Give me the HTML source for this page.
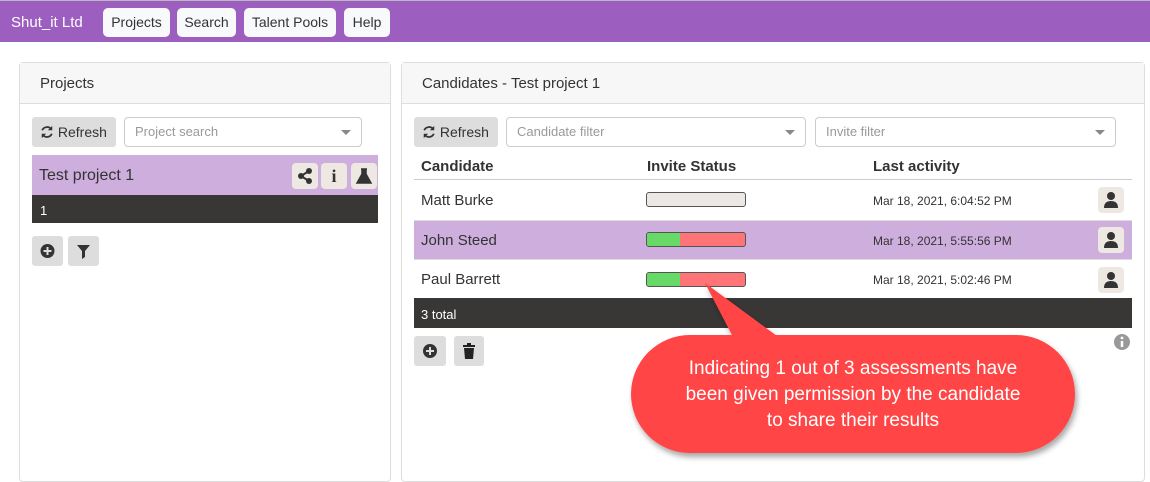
<!DOCTYPE html>
<html><head><meta charset="utf-8"><style>
*{box-sizing:border-box;margin:0;padding:0}
body{width:1150px;height:470px;overflow:hidden;background:#fff;font-family:"Liberation Sans",sans-serif;color:#333;position:relative}
.abs{position:absolute}
.nav{left:0;top:0;width:1150px;height:42px;background:#9c5ebf;border-top:1px solid #bbb}
.nb{position:absolute;top:7px;height:29px;background:#f8f9fa;border-radius:5px;font-size:14px;line-height:29px;text-align:center;color:#333}
.panel{border:1px solid #ddd;border-radius:4px;background:#fff}
.ph{position:absolute;left:0;top:0;right:0;height:41px;background:#f7f7f7;border-bottom:1px solid #ddd;font-size:15px;line-height:41px;padding-left:20px;color:#333}
.btn{position:absolute;background:#ddd;border-radius:3px;font-size:14px;line-height:30px;color:#333}
.sel{position:absolute;border:1px solid #ccc;border-radius:4px;height:30px;font-size:13px;color:#999;line-height:28px;padding-left:10px;background:#fff}
.sel:after{content:"";position:absolute;right:10px;top:12px;border:5px solid transparent;border-top:5px solid #888}
.ib{position:absolute;width:26px;height:26px;background:#eee8e2;border-radius:4px}
.row{position:absolute;left:414px;width:718px;font-size:15px}
.bar{position:absolute;left:646px;width:100px;height:15px;border:1px solid #555;border-radius:3px;overflow:hidden;background:#ece8e5}
.d{position:absolute;left:873px;font-size:12px;color:#333}
</style></head><body>
<div class="abs nav">
<div class="abs" style="left:11px;top:13px;color:#fff;font-size:15px">Shut_it Ltd</div>
<div class="nb" style="left:103px;width:67px">Projects</div>
<div class="nb" style="left:177px;width:59px">Search</div>
<div class="nb" style="left:244px;width:92px">Talent Pools</div>
<div class="nb" style="left:344px;width:46px">Help</div>
</div>

<div class="abs panel" style="left:19px;top:62px;width:372px;height:420px"><div class="ph">Projects</div></div>
<div class="btn" style="left:32px;top:117px;width:84px;padding-left:8px"><svg width="14" height="14" viewBox="0 0 16 16" style="vertical-align:-2px"><path d="M13 5A6 6 0 0 0 2.5 6M3 11a6 6 0 0 0 10.5-1" stroke="#333" stroke-width="2" fill="none"/><path d="M14 1v5h-5zM2 15v-5h5z" fill="#333"/></svg> Refresh</div>
<div class="sel" style="left:124px;top:117px;width:238px">Project search</div>
<div class="abs" style="left:32px;top:155px;width:346px;height:40px;background:#ceaedd;font-size:16px;line-height:42px;padding-left:7px;color:#333">Test project 1</div>
<div class="ib" style="left:292px;top:163px"><svg width="26" height="26" viewBox="0 0 26 26"><circle cx="17" cy="8" r="3" fill="#333"/><circle cx="9" cy="13" r="3" fill="#333"/><circle cx="17" cy="18" r="3" fill="#333"/><path d="M17 8L9 13L17 18" stroke="#333" stroke-width="2" fill="none"/></svg></div>
<div class="ib" style="left:321px;top:163px;font-weight:bold;text-align:center;line-height:26px;font-size:18px;font-family:'Liberation Serif',serif">i</div>
<div class="ib" style="left:351px;top:163px"><svg width="26" height="26" viewBox="0 0 26 26"><path d="M10 6h6M11 6v5l-5 9h14l-5-9V6" fill="#333" stroke="#333" stroke-width="1.5"/></svg></div>
<div class="abs" style="left:32px;top:195px;width:346px;height:28px;background:#393735;color:#fff;font-size:13px;line-height:31px;padding-left:8px">1</div>
<div class="btn" style="left:32px;top:236px;width:31px;height:30px"><svg width="31" height="30" viewBox="0 0 31 30"><circle cx="15.5" cy="15" r="7" fill="#333"/><path d="M15.5 11v8M11.5 15h8" stroke="#ddd" stroke-width="2"/></svg></div>
<div class="btn" style="left:68px;top:236px;width:31px;height:30px"><svg width="31" height="30" viewBox="0 0 31 30"><path d="M9 9h13l-5 6v6l-3 2v-8z" fill="#333"/></svg></div>

<div class="abs panel" style="left:401px;top:62px;width:744px;height:420px"><div class="ph">Candidates - Test project 1</div></div>
<div class="btn" style="left:414px;top:117px;width:84px;padding-left:8px"><svg width="14" height="14" viewBox="0 0 16 16" style="vertical-align:-2px"><path d="M13 5A6 6 0 0 0 2.5 6M3 11a6 6 0 0 0 10.5-1" stroke="#333" stroke-width="2" fill="none"/><path d="M14 1v5h-5zM2 15v-5h5z" fill="#333"/></svg> Refresh</div>
<div class="sel" style="left:506px;top:117px;width:300px">Candidate filter</div>
<div class="sel" style="left:815px;top:117px;width:301px">Invite filter</div>
<div class="row" style="top:152px;height:28px;border-bottom:1px solid #ccc;font-weight:bold">
<span class="abs" style="left:7px;top:6px">Candidate</span><span class="abs" style="left:233px;top:6px">Invite Status</span><span class="abs" style="left:459px;top:6px">Last activity</span></div>
<div class="row" style="top:180px;height:40px;line-height:42px;padding-left:7px">Matt Burke</div>
<div class="row" style="top:220px;height:40px;line-height:40px;padding-left:7px;background:#ceaedd;border-top:1px solid #ddd;border-bottom:1px solid #ddd">John Steed</div>
<div class="row" style="top:260px;height:38px;line-height:40px;padding-left:7px">Paul Barrett</div>
<div class="bar" style="top:192px"></div>
<div class="bar" style="top:232px;background:#ff7477"><div style="width:33px;height:100%;background:#66d966"></div></div>
<div class="bar" style="top:272px;background:#ff7477"><div style="width:33px;height:100%;background:#66d966"></div></div>
<div class="d" style="top:194px">Mar 18, 2021, 6:04:52 PM</div>
<div class="d" style="top:234px">Mar 18, 2021, 5:55:56 PM</div>
<div class="d" style="top:273px">Mar 18, 2021, 5:02:46 PM</div>
<div class="ib" style="left:1098px;top:187px"><svg width="26" height="26" viewBox="0 0 26 26"><circle cx="13" cy="9" r="4" fill="#333"/><path d="M6 21q0-7 7-7t7 7z" fill="#333"/></svg></div>
<div class="ib" style="left:1098px;top:227px"><svg width="26" height="26" viewBox="0 0 26 26"><circle cx="13" cy="9" r="4" fill="#333"/><path d="M6 21q0-7 7-7t7 7z" fill="#333"/></svg></div>
<div class="ib" style="left:1098px;top:267px"><svg width="26" height="26" viewBox="0 0 26 26"><circle cx="13" cy="9" r="4" fill="#333"/><path d="M6 21q0-7 7-7t7 7z" fill="#333"/></svg></div>
<div class="abs" style="left:414px;top:298px;width:718px;height:30px;background:#393735;color:#fff;font-size:13px;line-height:33px;padding-left:7px">3 total</div>
<div class="btn" style="left:414px;top:336px;width:32px;height:30px"><svg width="32" height="30" viewBox="0 0 32 30"><circle cx="16" cy="15" r="7" fill="#333"/><path d="M16 11v8M12 15h8" stroke="#ddd" stroke-width="2"/></svg></div>
<div class="btn" style="left:454px;top:336px;width:30px;height:30px"><svg width="30" height="30" viewBox="0 0 30 30"><path d="M9 9h12v2H9zM13 7h4v2h-4zM10 12h10l-1 11h-8z" fill="#222"/></svg></div>
<svg class="abs" style="left:1112px;top:332px" width="20" height="20" viewBox="0 0 20 20"><circle cx="10" cy="10" r="8" fill="#999"/><circle cx="10" cy="6" r="1.4" fill="#fff"/><path d="M10 9v6" stroke="#fff" stroke-width="2.5"/></svg>

<svg class="abs" style="left:0;top:0" width="1150" height="470"><defs><filter id="s" x="-10%" y="-10%" width="120%" height="130%"><feDropShadow dx="2" dy="4" stdDeviation="3" flood-color="#000" flood-opacity=".35"/></filter></defs>
<g filter="url(#s)"><path d="M705 283L777 336L733 336Z" fill="#ff4444"/><rect x="631" y="335" width="444" height="118" rx="59" fill="#ff4444"/><path d="M705 283L777 337L733 337Z" fill="#ff4444"/></g></svg>
<div class="abs" style="left:631px;top:356px;width:444px;text-align:center;color:#fff;font-size:19px;line-height:26px">Indicating 1 out of 3 assessments have<br>been given permission by the candidate<br>to share their results</div>
</body></html>
